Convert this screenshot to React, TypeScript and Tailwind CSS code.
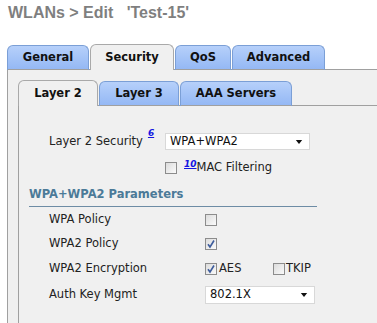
import type { ReactNode } from 'react'

const font = { fontFamily: '"DejaVu Sans", Verdana, sans-serif' }

function Tab({ label, width, active }: { label: string; width: string; active?: boolean }) {
  return (
    <div
      className={`${width} -mb-px flex h-[25px] items-center justify-center rounded-t-[6px] border border-b-0 text-[11.5px] font-bold text-[#111] ${
        active
          ? 'z-10 h-[26px] border-[#a9a9a9] bg-[#f0f0f0]'
          : 'border-[#7b9fd6] bg-gradient-to-b from-[#b6d0fa] to-[#93b7f4] shadow-[inset_0_-1px_0_#a0a0a0]'
      }`}
    >
      {label}
    </div>
  )
}

function Checkbox({ checked }: { checked?: boolean }) {
  return (
    <span className="relative inline-block h-[12px] w-[12px] shrink-0 border border-[#8c8c8c] bg-gradient-to-br from-[#dcdcdc] to-[#fafafa]">
      {checked && (
        <svg viewBox="0 0 10 10" className="absolute left-0 top-0 h-[10px] w-[10px]">
          <path d="M2 5.2 L4 8 L8 1.5" fill="none" stroke="#3d5c9c" strokeWidth="1.6" />
        </svg>
      )}
    </span>
  )
}

function Select({ value, width, height }: { value: string; width: string; height: string }) {
  return (
    <div
      className={`${width} ${height} flex items-center justify-between border border-[#d8d8d8] bg-white pl-[4px] pr-[6px] text-[11.5px] text-[#111]`}
    >
      <span>{value}</span>
      <svg viewBox="0 0 8 5" className="h-[4px] w-[8px]">
        <path d="M0 0 H8 L4 5 Z" fill="#111" />
      </svg>
    </div>
  )
}

function Row({ label, children, className }: { label: string; children: ReactNode; className: string }) {
  return (
    <div className={`flex items-center ${className}`}>
      <span className="w-[156px] text-[11.5px] text-[#222]">{label}</span>
      {children}
    </div>
  )
}

export default function App() {
  return (
    <div className="flex h-[323px] w-[377px] flex-col overflow-hidden bg-white" style={font}>
      <div
        className="ml-[8px] mt-[4px] text-[16px] font-bold leading-[18px] text-[#7f7f7f]"
        style={{ fontFamily: '"Liberation Sans", Arial, sans-serif' }}
      >
        WLANs &gt; Edit&nbsp;&nbsp;&nbsp;'Test-15'
      </div>

      <div className="ml-[7px] mt-[22px] flex items-end gap-[1px] border-b border-[#a0a0a0]">
        <Tab label="General" width="w-[82px]" />
        <Tab label="Security" width="w-[84px]" active />
        <Tab label="QoS" width="w-[56px]" />
        <Tab label="Advanced" width="w-[93px]" />
      </div>

      <div className="ml-[7px] flex flex-1 flex-col border-l border-[#a0a0a0] bg-[#f0f0f0] pl-[10px] pt-[10px]">
        <div className="flex items-end gap-[1px] border-b border-[#a0a0a0]">
          <Tab label="Layer 2" width="w-[80px]" active />
          <Tab label="Layer 3" width="w-[80px]" />
          <Tab label="AAA Servers" width="w-[112px]" />
        </div>

        <div className="flex flex-1 flex-col border-l border-[#a0a0a0] pl-[10px]">
          <div className="ml-[20px] mt-[27px] flex h-[17px] items-center">
            <span className="flex w-[116px] items-start text-[11.5px] text-[#222]">
              Layer 2 Security
              <a className="ml-[5px] -mt-[6px] text-[9px] font-bold italic text-[#1515e0] underline">6</a>
            </span>
            <Select value="WPA+WPA2" width="w-[145px]" height="h-[17px]" />
          </div>

          <div className="ml-[136px] mt-[12px] flex h-[12px] items-center">
            <Checkbox />
            <a className="ml-[7px] -mt-[8px] text-[9px] font-bold italic leading-none text-[#1515e0] underline">10</a>
            <span className="text-[11.5px] text-[#222]">MAC Filtering</span>
          </div>

          <div className="mt-[12px] w-[288px] border-b border-[#6d8ca5] pb-[4px] text-[11.5px] font-bold leading-[16px] text-[#4b7a98]">
            WPA+WPA2 Parameters
          </div>

          <Row label="WPA Policy" className="ml-[20px] mt-[7px] h-[12px]">
            <Checkbox />
          </Row>
          <Row label="WPA2 Policy" className="ml-[20px] mt-[12px] h-[12px]">
            <Checkbox checked />
          </Row>
          <Row label="WPA2 Encryption" className="ml-[20px] mt-[13px] h-[12px]">
            <Checkbox checked />
            <span className="ml-[2px] w-[54px] text-[11.5px] text-[#222]">AES</span>
            <Checkbox />
            <span className="ml-[1px] text-[11.5px] text-[#222]">TKIP</span>
          </Row>
          <Row label="Auth Key Mgmt" className="ml-[20px] mt-[11px] h-[18px]">
            <Select value="802.1X" width="w-[110px]" height="h-[18px]" />
          </Row>
        </div>
      </div>
    </div>
  )
}
